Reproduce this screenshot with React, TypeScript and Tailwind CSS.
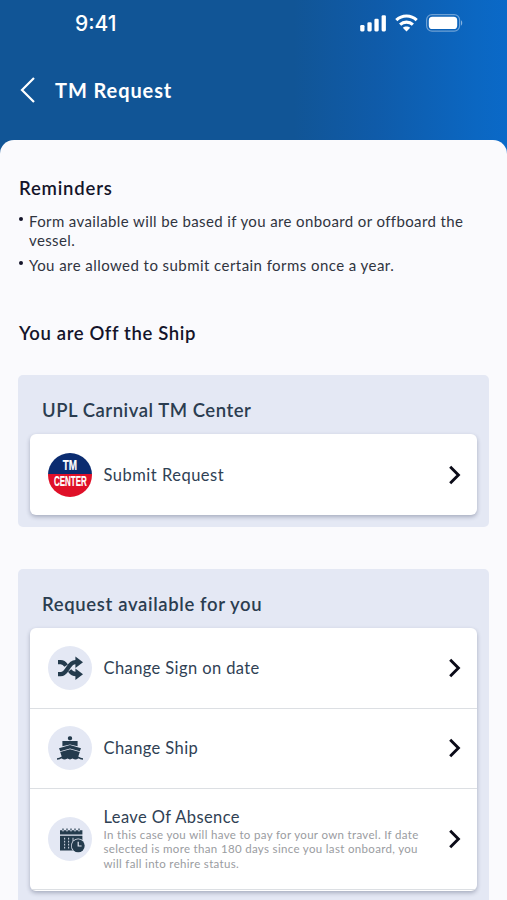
import React from "react";

const SignalIcon = () => (
  <svg width="27" height="18" viewBox="0 0 27 18" fill="white">
    <rect x="0.2" y="11" width="4.3" height="6.4" rx="1.3" />
    <rect x="7.4" y="8.2" width="4.3" height="9.2" rx="1.3" />
    <rect x="14.4" y="4.8" width="4.3" height="12.6" rx="1.3" />
    <rect x="21.6" y="1.2" width="4.3" height="16.2" rx="1.3" />
  </svg>
);

const WifiIcon = () => (
  <svg width="23" height="18" viewBox="0 0 23 18" fill="none" stroke="white" strokeWidth="3.1">
    <path d="M1.3 6.1C7 0.6 16 0.6 21.7 6.1" />
    <path d="M5.1 10.7C8.7 7.3 14.3 7.3 17.9 10.7" />
    <path d="M11.5 17.4L7.8 13.8C9.7 12 13.3 12 15.2 13.8Z" fill="white" stroke="none" />
  </svg>
);

const BatteryIcon = () => (
  <svg width="37" height="18" viewBox="0 0 37 18">
    <rect x="0.6" y="0.6" width="33" height="16.6" rx="5.4" fill="none" stroke="white" strokeOpacity="0.4" strokeWidth="1.2" />
    <rect x="2.8" y="2.8" width="28.4" height="12.2" rx="3.6" fill="white" />
    <path d="M35 6.2C36.6 7 36.6 10.8 35 11.6Z" fill="white" fillOpacity="0.5" />
  </svg>
);

const Chevron = () => (
  <svg className="shrink-0" width="13" height="20" viewBox="0 0 13 20" fill="none" stroke="#0b0b18" strokeWidth="2.9">
    <path d="M2.2 1.8L10.4 10L2.2 18.2" />
  </svg>
);

const TmCenterLogo = () => (
  <div className="flex size-[44px] shrink-0 flex-col items-center overflow-hidden rounded-full bg-[linear-gradient(#0b2c70_0_48%,#df1028_48%_100%)] font-['Liberation_Sans',sans-serif] text-[13.8px] leading-[16px] font-bold text-white [-webkit-text-stroke:0.2px_white]">
    <span className="mt-[5px] scale-x-[0.72]">TM</span>
    <span className="scale-x-[0.58]">CENTER</span>
  </div>
);

const ShuffleIcon = () => (
  <svg width="25" height="24" viewBox="0 0 25 24">
    <g fill="none" stroke="#243b4d" strokeWidth="4.2">
      <path d="M0 6.2H2.6C5.2 6.2 6.8 7.6 8.2 9.6" />
      <path d="M11.6 14.4C13.4 16.8 15 18.2 18 18.2H19" />
      <path d="M0 18.2H2.6C9.8 18.2 9.8 6.2 17.4 6.2H19" />
    </g>
    <path d="M17.4 0.4L25 6.2L17.4 12Z M17.4 12.4L25 18.2L17.4 24Z" fill="#243b4d" />
  </svg>
);

const ShipIcon = () => (
  <svg width="26" height="24" viewBox="0 0 26 24" fill="#243b4d">
    <rect x="10.9" y="0.2" width="4.2" height="4" rx="1.6" />
    <path d="M5.4 5H20.6V10.2L13 8.4L5.4 10.2Z" />
    <path d="M13 9L24 12.2L22.8 15.2L13 12.4L3.2 15.2L2 12.2Z" />
    <path d="M13 13.2L22.8 16L20.8 22H5.2L3.2 16Z" />
    <path d="M0 23C2 23 3.4 22.4 4.6 21.4C7 23.4 9 23 10.6 21.8C12.2 23 13.8 23 15.4 21.8C17 23 19 23.4 21.4 21.4C22.6 22.4 24 23 26 23" fill="none" stroke="#243b4d" strokeWidth="1.4" />
  </svg>
);

const CalendarIcon = () => (
  <svg className="mt-[2px] ml-[4px]" width="25" height="25" viewBox="0 0 25 25">
    <path d="M0 2.2H22.4V6.6H0Z M0 7.8H22.4V22.4H0Z" fill="#243b4d" />
    <path d="M3 1V3.2M7 1V3.2M11 1V3.2M15 1V3.2M19 1V3.2" stroke="#e4e8f4" strokeWidth="1.8" />
    <path d="M3 0.4V2.6M7 0.4V2.6M11 0.4V2.6M15 0.4V2.6M19 0.4V2.6" stroke="#243b4d" strokeWidth="1.2" />
    <path d="M4.6 9.8V20.4M8.6 9.8V20.4" stroke="#c9d0dd" strokeWidth="1.1" strokeDasharray="1.8 1.2" />
    <path d="M13 9.8V14" stroke="#c9d0dd" strokeWidth="1" />
    <circle cx="18.2" cy="17.8" r="7.2" fill="#e4e8f4" />
    <circle cx="18.2" cy="17.8" r="6.5" fill="#243b4d" />
    <path d="M18.2 13.8V18H21.6" fill="none" stroke="#e4e8f4" strokeWidth="1.2" />
  </svg>
);

const IconCircle = ({ children }: { children: React.ReactNode }) => (
  <div className="flex size-[44px] shrink-0 items-center justify-center rounded-full bg-[#e4e8f4]">
    {children}
  </div>
);

const cardClass =
  "overflow-hidden rounded-[6px] bg-white shadow-[0_2px_4px_rgba(40,50,80,0.32)]";

export default function App() {
  return (
    <div className="flex h-[900px] w-[507px] flex-col overflow-hidden bg-[linear-gradient(90deg,#115596_0%,#115596_58%,#0f5ba9_74%,#0b67c2_94%,#0a69c8_100%)] font-['Lato',sans-serif]">
      <header className="h-[140px] shrink-0 text-white">
        <div className="flex h-[45px] items-center justify-between pl-[75px] pr-[44px]">
          <span className="pt-px font-['Inter',sans-serif] text-[21px] font-medium leading-none">9:41</span>
          <div className="flex items-center gap-[8px]">
            <SignalIcon />
            <WifiIcon />
            <BatteryIcon />
          </div>
        </div>
        <div className="flex h-[90px] items-center pl-[20px]">
          <svg width="15" height="26" viewBox="0 0 15 26" fill="none" stroke="white" strokeWidth="2.2">
            <path d="M14 1L2 13L14 25" />
          </svg>
          <h1 className="ml-[20px] text-[20px] font-bold tracking-[0.9px]">TM Request</h1>
        </div>
      </header>

      <main className="h-[760px] shrink-0 overflow-hidden rounded-t-[14px] bg-[#fafafd] px-[18px] pt-[35px]">
        <h2 className="pl-px text-[18.5px] font-semibold leading-[26px] tracking-[0.8px] text-[#14142a]">Reminders</h2>
        <ul className="mt-[11px] text-[15px] leading-[19px] text-[#30343f]">
          <li className="flex">
            <span className="mt-[5px] mr-[6px] ml-px size-[4px] shrink-0 rounded-full bg-[#14142a]" />
            <span className="whitespace-nowrap tracking-[0.38px]">
              Form available will be based if you are onboard or offboard the
              <br />
              vessel.
            </span>
          </li>
          <li className="mt-[6px] flex">
            <span className="mt-[5px] mr-[6px] ml-px size-[4px] shrink-0 rounded-full bg-[#14142a]" />
            <span className="whitespace-nowrap tracking-[0.44px]">You are allowed to submit certain forms once a year.</span>
          </li>
        </ul>
        <h2 className="mt-[45px] pl-px text-[18.5px] font-semibold leading-[26px] tracking-[0.62px] text-[#14142a]">You are Off the Ship</h2>

        <section className="mt-[29px] h-[152px] rounded-[5px] bg-[#e4e8f4] px-[12px] pt-[22px]">
          <h3 className="pl-[12px] text-[18.5px] font-semibold leading-[26px] tracking-[0.53px] text-[#2b3d50]">UPL Carnival TM Center</h3>
          <div className={`mt-[11px] ${cardClass}`}>
            <div className="flex h-[81px] items-center pr-[16px] pl-[18px]">
              <TmCenterLogo />
              <span className="ml-[11.5px] flex-1 pt-px text-[16.5px] tracking-[0.5px] text-[#2f4154]">Submit Request</span>
              <Chevron />
            </div>
          </div>
        </section>

        <section className="mt-[42px] h-[360px] rounded-[5px] bg-[#e4e8f4] px-[12px] pt-[22px]">
          <h3 className="pl-[12px] text-[18.5px] font-semibold leading-[26px] tracking-[0.64px] text-[#2b3d50]">Request available for you</h3>
          <div className={`mt-[11px] ${cardClass}`}>
            <div className="flex h-[81px] items-center border-b border-[#dcdfe3] pr-[16px] pl-[18px]">
              <IconCircle><ShuffleIcon /></IconCircle>
              <span className="ml-[11.5px] flex-1 pt-px text-[16.5px] tracking-[0.4px] text-[#2f4154]">Change Sign on date</span>
              <Chevron />
            </div>
            <div className="flex h-[80px] items-center border-b border-[#dcdfe3] pr-[16px] pb-px pl-[18px]">
              <IconCircle><ShipIcon /></IconCircle>
              <span className="ml-[11.5px] flex-1 text-[16.5px] tracking-[0.4px] text-[#2f4154]">Change Ship</span>
              <Chevron />
            </div>
            <div className="flex h-[101px] items-center border-b border-[#dcdfe3] pr-[16px] pl-[18px]">
              <IconCircle><CalendarIcon /></IconCircle>
              <div className="ml-[11.5px] flex-1 whitespace-nowrap pt-px">
                <div className="text-[16.5px] leading-[20px] tracking-[0.4px] text-[#2f4154]">Leave Of Absence</div>
                <p className="pt-[0.6px] text-[11.5px] leading-[14.7px] tracking-[0.33px] text-[#9a9c9f]">
                  In this case you will have to pay for your own travel. If date
                  <br />
                  selected is more than 180 days since you last onboard, you
                  <br />
                  will fall into rehire status.
                </p>
              </div>
              <Chevron />
            </div>
            <div className="h-px" />
          </div>
        </section>
      </main>
    </div>
  );
}
